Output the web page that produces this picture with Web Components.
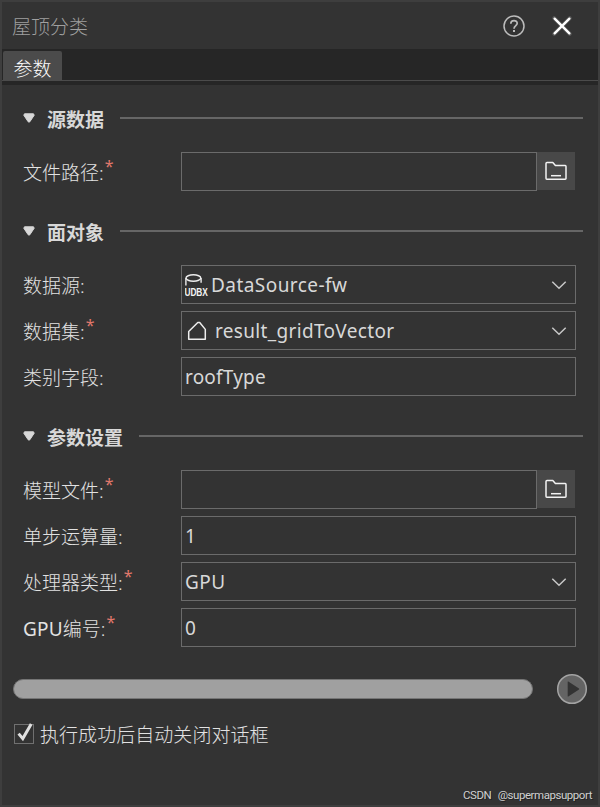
<!DOCTYPE html>
<html lang="zh-CN">
<head>
<meta charset="utf-8">
<title>屋顶分类</title>
<style>
html,body{margin:0;height:100%;background:#333}
body{font-family:"Noto Sans","Noto Sans CJK SC",sans-serif;font-size:19px;color:#d8d8d8;overflow:hidden}
</style>
</head>
<body>
<roof-dialog></roof-dialog>
<script>
const define=(name,html,setup)=>{
  const t=document.createElement('template');t.innerHTML=html;
  customElements.define(name,class extends HTMLElement{
    constructor(){super();this.attachShadow({mode:'open'}).append(t.content.cloneNode(true));}
    connectedCallback(){if(setup)setup(this,this.shadowRoot);}
  });
};

define('ui-icon',`<style>:host{display:block;flex:none}svg{display:block}</style>`,(el,root)=>{
  const icons={
    help:`<svg width="24" height="24" fill="none" stroke="#bcbcbc" stroke-width="1.5"><circle cx="12" cy="12" r="10"/><path d="M8.8 9.8C8.8 5.5 15.2 5.7 15.2 9.3C15.2 11.6 12 11.6 12 14.8" stroke-width="1.7"/><path d="M12 16v2" stroke-width="2"/></svg>`,
    close:`<svg width="24" height="24" fill="none" stroke-linecap="round"><path d="M4.2 4.2L19.8 19.8M19.8 4.2L4.2 19.8" stroke="#555" stroke-width="4"/><path d="M4.6 4.6L19.4 19.4M19.4 4.6L4.6 19.4" stroke="#fff" stroke-width="2.3"/></svg>`,
    folder:`<svg width="38" height="38" fill="none" stroke="#f2f2f2" stroke-width="1.5" stroke-linejoin="round"><path d="M9 26.3V11.5Q9 10.4 10 10.4H15.8L18.4 13.4H28.3Q29 13.4 29 14.4V26.5Q29 27.2 28.2 27.2H9.8Q9 27.2 9 26.3Z"/><path d="M14 23.7H24"/></svg>`,
    chevron:`<svg width="16" height="10" fill="none" stroke="#c8c8c8" stroke-width="1.5"><path d="M1.3 1.8L8 8.2L14.7 1.8"/></svg>`,
    house:`<svg width="20" height="20" fill="none" stroke="#ededed" stroke-width="1.5" stroke-linejoin="round"><path d="M1.7 18.2V10.5L10.8 1.5H12.7L18.3 8.4V18.2Z"/></svg>`,
    udbx:`<svg width="24" height="24" fill="none" stroke="#ededed" stroke-width="1.4"><ellipse cx="8.4" cy="5" rx="7.4" ry="3.2"/><path d="M.9 12.6V5M16.1 9.8V5"/><text transform="translate(-.4 22.6) scale(.8 1)" x="0" y="0" textLength="29" font-family="Liberation Sans" font-size="10.4" font-weight="700" fill="#f2f2f2" stroke="none">UDBX</text></svg>`,
    triangle:`<svg width="12" height="10"><path d="M1.5 .8H10.5L11.2 2.2L6.8 8.8Q6 9.6 5.2 8.8L.8 2.2Z" fill="#d8d8d8" stroke="#d8d8d8" stroke-linejoin="round"/></svg>`,
    run:`<svg width="32" height="32"><circle cx="16" cy="16" r="14.3" fill="#646464" stroke="#a4a4a4" stroke-width="1.5"/><path d="M11.7 8.8Q11.7 8.2 12.3 8.6L23 15.6Q23.4 16 23 16.4L12.3 23.4Q11.7 23.8 11.7 23.2Z" fill="#333"/></svg>`,
    check:`<svg width="20" height="22"><rect x=".5" y="1.5" width="19" height="19" fill="none" stroke="#707070"/><path d="M4.6 10.6L8.8 15.6L17.2 1" fill="none" stroke="#e0e0e0" stroke-width="3"/></svg>`
  };
  root.innerHTML+=icons[el.getAttribute('name')];
});

define('title-bar',`<style>
:host{display:flex;align-items:center;height:47px;box-sizing:border-box;padding:0 24px 0 10px;color:#a0a0a0;background:#333;font-weight:300}
.name{flex:1;line-height:28px;padding-top:2px}.close{margin-left:24px}
</style><div class="name"><slot></slot></div><ui-icon name="help"></ui-icon><ui-icon class="close" name="close"></ui-icon>`);

define('tab-strip',`<style>
:host{display:flex;height:36px;box-sizing:border-box;padding:2px 0 0 1px;background:linear-gradient(#4b4b4b,#4b4b4b) 0 31px/100% 1px no-repeat,#262626}
.tab{width:59px;height:30px;border-radius:2px 2px 0 0;background:#4b4b4b;color:#fff;text-align:center;line-height:36px;font-weight:300}
</style><div class="tab"><slot></slot></div>`);

define('form-section',`<style>
:host{display:block;margin-bottom:21px}
header{height:38px;margin-bottom:15px;display:flex;align-items:center;padding:0 15px 0 21px}
b{margin-left:12px;line-height:28px;padding-top:4px}.line{flex:1;height:2px;background:#666;margin-left:16px}
.rows{display:grid;gap:7px}
</style><header><ui-icon name="triangle"></ui-icon><b></b><div class="line"></div></header><div class="rows"><slot></slot></div>`,
(el,r)=>{r.querySelector('b').textContent=el.getAttribute('heading');});

define('form-row',`<style>
:host{display:grid;grid-template-columns:158px 395px;height:39px;padding-left:21px}
label{display:flex;align-items:center;font-weight:300;line-height:28px;color:#e2e2e2}
.t{padding-top:2px}
.latin{font-weight:400;letter-spacing:.2px}
.star{color:#e0786c;align-self:flex-start;line-height:29px;margin-left:1px;font-weight:400;font-size:16px}
</style><label><span class="t"></span></label><slot></slot>`,
(el,r)=>{
  const t=r.querySelector('.t'),m=el.getAttribute('label').match(/^([A-Z]*)(.*)$/);
  if(m[1]){const s=document.createElement('span');s.className='latin';s.textContent=m[1];t.append(s);}
  t.append(m[2]);
  if(el.hasAttribute('required')){const s=document.createElement('span');s.className='star';s.textContent='*';r.querySelector('label').append(s);}
});

define('form-field',`<style>
:host{display:flex;height:39px}
.box{flex:1;box-sizing:border-box;border:1px solid #6b6b6b;display:flex;align-items:center;padding:0 8px 0 3px}
.value{flex:1;line-height:28px;white-space:nowrap}
.browse{width:38px;height:38px;background:#484848;margin-right:1px}
</style><div class="box"><slot name="icon"></slot><div class="value"><slot></slot></div></div>`,
(el,r)=>{
  const k=el.getAttribute('kind');
  if(k==='select'){const i=document.createElement('ui-icon');i.setAttribute('name','chevron');r.querySelector('.box').append(i);}
  if(k==='file'){const i=document.createElement('ui-icon');i.setAttribute('name','folder');i.className='browse';r.append(i);}
});

define('progress-row',`<style>
:host{display:flex;align-items:center;justify-content:space-between;height:32px;padding:0 10px 0 11px}
.bar{width:520px;height:20px;box-sizing:border-box;border:1px solid #757575;border-radius:10px;background:#a0a0a0}
</style><div class="bar"></div><ui-icon name="run"></ui-icon>`);

define('check-row',`<style>
:host{display:flex;align-items:center;height:28px;padding-left:12px;gap:6px;font-weight:300;line-height:28px;color:#e2e2e2}
ui-icon{margin-top:-2px}span{letter-spacing:.05px}
</style><ui-icon name="check"></ui-icon><span><slot></slot></span>`);

define('roof-dialog',`<style>
:host{display:flex;flex-direction:column;box-sizing:border-box;width:600px;height:807px;border:2px solid #3e3e3e;background:#333}
main{padding-top:14px}
progress-row{margin-top:26px}check-row{margin-top:16px}
footer{margin-top:auto;padding:0 6px 1px 0;text-align:right;font:11.5px/18px Roboto,sans-serif;letter-spacing:-.45px;word-spacing:4px;color:#d0d0d0;text-shadow:1px 1px #222}
</style>
<title-bar>屋顶分类</title-bar><tab-strip>参数</tab-strip>
<main>
<form-section heading="源数据">
<form-row label="文件路径:" required><form-field kind="file"></form-field></form-row>
</form-section>
<form-section heading="面对象">
<form-row label="数据源:"><form-field kind="select"><ui-icon slot="icon" name="udbx" style="margin-right:2px"></ui-icon><span style="letter-spacing:.45px">DataSource-fw</span></form-field></form-row>
<form-row label="数据集:" required><form-field kind="select"><ui-icon slot="icon" name="house" style="margin:0 8px 0 2px"></ui-icon><span style="letter-spacing:.33px">result_gridToVector</span></form-field></form-row>
<form-row label="类别字段:"><form-field><span style="letter-spacing:.2px">roofType</span></form-field></form-row>
</form-section>
<form-section heading="参数设置">
<form-row label="模型文件:" required><form-field kind="file"></form-field></form-row>
<form-row label="单步运算量:"><form-field>1</form-field></form-row>
<form-row label="处理器类型:" required><form-field kind="select"><span style="letter-spacing:.5px">GPU</span></form-field></form-row>
<form-row label="GPU编号:" required><form-field>0</form-field></form-row>
</form-section>
<progress-row></progress-row>
<check-row>执行成功后自动关闭对话框</check-row>
</main>
<footer>CSDN @supermapsupport</footer>`);
</script>
</body>
</html>
